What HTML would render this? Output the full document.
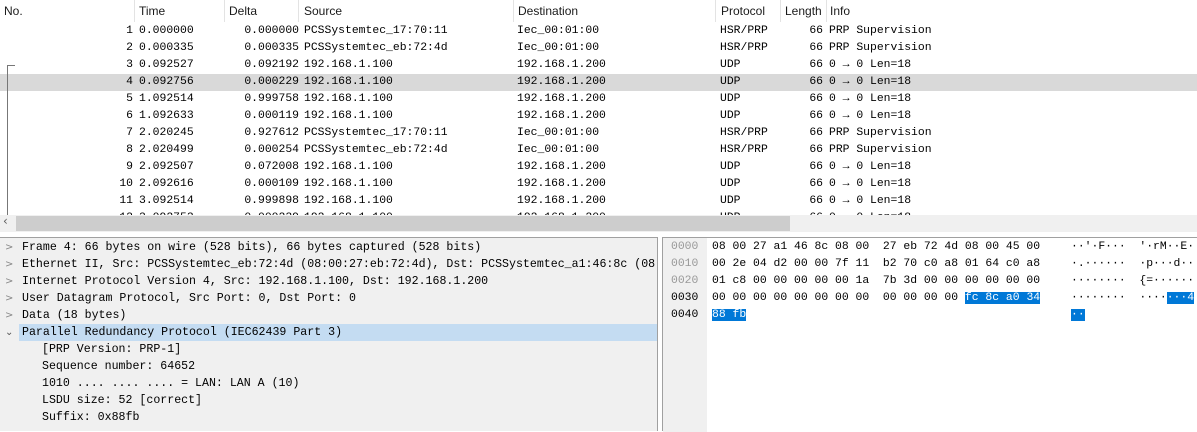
<!DOCTYPE html>
<html><head><meta charset="utf-8"><style>
*{margin:0;padding:0;box-sizing:border-box}
body{width:1197px;height:431px;overflow:hidden;background:#fff;font-family:"Liberation Mono",monospace;font-size:11.4px;color:#000;position:relative}
.hdr{position:absolute;top:0;left:0;width:1197px;height:22px;font-family:"Liberation Sans",sans-serif;font-size:12px}
.hdr span{position:absolute;top:4px;color:#1a1a1a}
.sep{position:absolute;top:0;width:1px;height:22px;background:#e3e3e3}
.row{position:absolute;left:0;width:1197px;height:17px;line-height:17px;white-space:pre}
.row span{position:absolute;top:0}
.r{text-align:right}
.sel{background:#d9d9d9}
.tree{position:absolute;left:0;top:237px;width:658px;height:194px;background:#f0f0f0;border-top:1px solid #a0a0a0;border-right:1px solid #a0a0a0;overflow:hidden}
.t{position:absolute;left:0;width:657px;height:17px;line-height:17px;white-space:pre;font-size:11.6px}
.t .c{position:absolute;left:5px;top:0;color:#888;font-family:"DejaVu Sans",sans-serif;font-size:10px}
.t .x{position:absolute;left:22px}
.t .y{position:absolute;left:42px}
.hex{position:absolute;left:662px;top:237px;width:535px;height:194px;background:#fff;border-top:1px solid #a0a0a0;border-left:1px solid #a0a0a0}
.off{position:absolute;left:0;top:0;width:44px;height:194px;background:#f0f0f0}
.h{position:absolute;height:17px;line-height:17px;white-space:pre;font-size:11.4px}
.hl{background:#0078d7;color:#fff}
</style></head><body>
<div class="hdr">
<span style="left:4px">No.</span><div class="sep" style="left:134px"></div>
<span style="left:139px">Time</span><div class="sep" style="left:224px"></div>
<span style="left:229px">Delta</span><div class="sep" style="left:298px"></div>
<span style="left:304px">Source</span><div class="sep" style="left:513px"></div>
<span style="left:518px">Destination</span><div class="sep" style="left:715px"></div>
<span style="left:721px">Protocol</span><div class="sep" style="left:780px"></div>
<span style="left:785px">Length</span><div class="sep" style="left:826px"></div>
<span style="left:830px">Info</span>
</div>
<div style="position:absolute;left:0;top:22px;width:1197px;height:193px;overflow:hidden">
<div class="row" style="top:1px"><span class="r" style="left:90px;width:43px">1</span><span style="left:139px">0.000000</span><span class="r" style="left:230px;width:69px">0.000000</span><span style="left:304px">PCSSystemtec_17:70:11</span><span style="left:517px">Iec_00:01:00</span><span style="left:720px">HSR/PRP</span><span class="r" style="left:790px;width:33px">66</span><span style="left:829px">PRP Supervision</span></div>
<div class="row" style="top:18px"><span class="r" style="left:90px;width:43px">2</span><span style="left:139px">0.000335</span><span class="r" style="left:230px;width:69px">0.000335</span><span style="left:304px">PCSSystemtec_eb:72:4d</span><span style="left:517px">Iec_00:01:00</span><span style="left:720px">HSR/PRP</span><span class="r" style="left:790px;width:33px">66</span><span style="left:829px">PRP Supervision</span></div>
<div class="row" style="top:35px"><span class="r" style="left:90px;width:43px">3</span><span style="left:139px">0.092527</span><span class="r" style="left:230px;width:69px">0.092192</span><span style="left:304px">192.168.1.100</span><span style="left:517px">192.168.1.200</span><span style="left:720px">UDP</span><span class="r" style="left:790px;width:33px">66</span><span style="left:829px">0 → 0 Len=18</span></div>
<div class="row sel" style="top:52px"><span class="r" style="left:90px;width:43px">4</span><span style="left:139px">0.092756</span><span class="r" style="left:230px;width:69px">0.000229</span><span style="left:304px">192.168.1.100</span><span style="left:517px">192.168.1.200</span><span style="left:720px">UDP</span><span class="r" style="left:790px;width:33px">66</span><span style="left:829px">0 → 0 Len=18</span></div>
<div class="row" style="top:69px"><span class="r" style="left:90px;width:43px">5</span><span style="left:139px">1.092514</span><span class="r" style="left:230px;width:69px">0.999758</span><span style="left:304px">192.168.1.100</span><span style="left:517px">192.168.1.200</span><span style="left:720px">UDP</span><span class="r" style="left:790px;width:33px">66</span><span style="left:829px">0 → 0 Len=18</span></div>
<div class="row" style="top:86px"><span class="r" style="left:90px;width:43px">6</span><span style="left:139px">1.092633</span><span class="r" style="left:230px;width:69px">0.000119</span><span style="left:304px">192.168.1.100</span><span style="left:517px">192.168.1.200</span><span style="left:720px">UDP</span><span class="r" style="left:790px;width:33px">66</span><span style="left:829px">0 → 0 Len=18</span></div>
<div class="row" style="top:103px"><span class="r" style="left:90px;width:43px">7</span><span style="left:139px">2.020245</span><span class="r" style="left:230px;width:69px">0.927612</span><span style="left:304px">PCSSystemtec_17:70:11</span><span style="left:517px">Iec_00:01:00</span><span style="left:720px">HSR/PRP</span><span class="r" style="left:790px;width:33px">66</span><span style="left:829px">PRP Supervision</span></div>
<div class="row" style="top:120px"><span class="r" style="left:90px;width:43px">8</span><span style="left:139px">2.020499</span><span class="r" style="left:230px;width:69px">0.000254</span><span style="left:304px">PCSSystemtec_eb:72:4d</span><span style="left:517px">Iec_00:01:00</span><span style="left:720px">HSR/PRP</span><span class="r" style="left:790px;width:33px">66</span><span style="left:829px">PRP Supervision</span></div>
<div class="row" style="top:137px"><span class="r" style="left:90px;width:43px">9</span><span style="left:139px">2.092507</span><span class="r" style="left:230px;width:69px">0.072008</span><span style="left:304px">192.168.1.100</span><span style="left:517px">192.168.1.200</span><span style="left:720px">UDP</span><span class="r" style="left:790px;width:33px">66</span><span style="left:829px">0 → 0 Len=18</span></div>
<div class="row" style="top:154px"><span class="r" style="left:90px;width:43px">10</span><span style="left:139px">2.092616</span><span class="r" style="left:230px;width:69px">0.000109</span><span style="left:304px">192.168.1.100</span><span style="left:517px">192.168.1.200</span><span style="left:720px">UDP</span><span class="r" style="left:790px;width:33px">66</span><span style="left:829px">0 → 0 Len=18</span></div>
<div class="row" style="top:171px"><span class="r" style="left:90px;width:43px">11</span><span style="left:139px">3.092514</span><span class="r" style="left:230px;width:69px">0.999898</span><span style="left:304px">192.168.1.100</span><span style="left:517px">192.168.1.200</span><span style="left:720px">UDP</span><span class="r" style="left:790px;width:33px">66</span><span style="left:829px">0 → 0 Len=18</span></div>
<div class="row" style="top:188px"><span class="r" style="left:90px;width:43px">12</span><span style="left:139px">3.092753</span><span class="r" style="left:230px;width:69px">0.000239</span><span style="left:304px">192.168.1.100</span><span style="left:517px">192.168.1.200</span><span style="left:720px">UDP</span><span class="r" style="left:790px;width:33px">66</span><span style="left:829px">0 → 0 Len=18</span></div>
</div>
<div style="position:absolute;left:7px;top:65px;width:1px;height:150px;background:#777"></div>
<div style="position:absolute;left:7px;top:65px;width:8px;height:1px;background:#777"></div>
<div style="position:absolute;left:0;top:215px;width:1197px;height:17px;background:#f0f0f0"></div>
<div style="position:absolute;left:16px;top:216px;width:774px;height:15px;background:#cdcdcd"></div>
<div style="position:absolute;left:3px;top:214px;font-family:'DejaVu Sans',sans-serif;font-size:12px;color:#606060">‹</div>
<div class="tree">
<div class="t" style="top:1px"><span class="c">&gt;</span><span class="x">Frame 4: 66 bytes on wire (528 bits), 66 bytes captured (528 bits)</span></div>
<div class="t" style="top:18px"><span class="c">&gt;</span><span class="x">Ethernet II, Src: PCSSystemtec_eb:72:4d (08:00:27:eb:72:4d), Dst: PCSSystemtec_a1:46:8c (08:00:27:a1:46:8c)</span></div>
<div class="t" style="top:35px"><span class="c">&gt;</span><span class="x">Internet Protocol Version 4, Src: 192.168.1.100, Dst: 192.168.1.200</span></div>
<div class="t" style="top:52px"><span class="c">&gt;</span><span class="x">User Datagram Protocol, Src Port: 0, Dst Port: 0</span></div>
<div class="t" style="top:69px"><span class="c">&gt;</span><span class="x">Data (18 bytes)</span></div>
<div class="t" style="top:86px"><span class="c" style="color:#555">⌄</span><span class="x" style="left:19px;width:638px;background:#c4dcf2;padding-left:3px">Parallel Redundancy Protocol (IEC62439 Part 3)</span></div>
<div class="t" style="top:103px"><span class="y">[PRP Version: PRP-1]</span></div>
<div class="t" style="top:120px"><span class="y">Sequence number: 64652</span></div>
<div class="t" style="top:137px"><span class="y">1010 .... .... .... = LAN: LAN A (10)</span></div>
<div class="t" style="top:154px"><span class="y">LSDU size: 52 [correct]</span></div>
<div class="t" style="top:171px"><span class="y">Suffix: 0x88fb</span></div>
</div>
<div class="hex">
<div class="off"></div>
<div class="h" style="left:8px;top:1px;color:#999">0000</div>
<div class="h" style="left:8px;top:18px;color:#999">0010</div>
<div class="h" style="left:8px;top:35px;color:#999">0020</div>
<div class="h" style="left:8px;top:52px">0030</div>
<div class="h" style="left:8px;top:69px">0040</div>
<div class="h" style="left:49px;top:1px">08 00 27 a1 46 8c 08 00  27 eb 72 4d 08 00 45 00</div>
<div class="h" style="left:49px;top:18px">00 2e 04 d2 00 00 7f 11  b2 70 c0 a8 01 64 c0 a8</div>
<div class="h" style="left:49px;top:35px">01 c8 00 00 00 00 00 1a  7b 3d 00 00 00 00 00 00</div>
<div class="h" style="left:49px;top:52px">00 00 00 00 00 00 00 00  00 00 00 00 <span class="hl">fc 8c a0 34</span></div>
<div class="h" style="left:49px;top:69px"><span class="hl">88 fb</span></div>
<div class="h" style="left:408px;top:1px">··'·F···  '·rM··E·</div>
<div class="h" style="left:408px;top:18px">·.······  ·p···d··</div>
<div class="h" style="left:408px;top:35px">········  {=······</div>
<div class="h" style="left:408px;top:52px">········  ····<span class="hl">···4</span></div>
<div class="h" style="left:408px;top:69px"><span class="hl">··</span></div>
</div>
</body></html>
